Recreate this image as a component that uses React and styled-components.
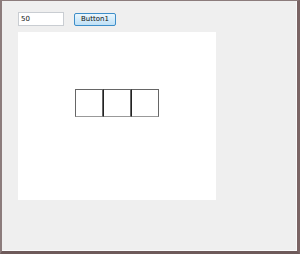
import styled, { createGlobalStyle } from 'styled-components'

const Global = createGlobalStyle`
  html, body {
    margin: 0;
    padding: 0;
    background: #efefef;
  }
`

const Frame = styled.div`
  box-sizing: border-box;
  width: 300px;
  height: 254px;
  background: #efefef;
  border-top: 1px solid #8c7c7c;
  border-left: 2px solid #8c7c7c;
  border-right: 3px solid #7a6464;
  border-bottom: 3px solid #6e5a5a;
  box-shadow: inset -1px -1px 0 #fafafa;
  padding: 11px 0 0 16px;
  font-family: Tahoma, "DejaVu Sans", sans-serif;
`

const Toolbar = styled.div`
  display: flex;
  align-items: center;
  gap: 10px;
  height: 14px;
`

const TextBox = styled.div`
  box-sizing: border-box;
  width: 46px;
  height: 14px;
  background: #fff;
  border: 1px solid #c9cdd2;
  font-size: 7px;
  line-height: 12px;
  padding-left: 2px;
  color: #111;
`

const Button = styled.div`
  box-sizing: border-box;
  width: 42px;
  height: 13px;
  border: 1px solid #3d8ec9;
  border-radius: 2px;
  background: linear-gradient(#eaf6fd, #d3ebfa 50%, #bfe0f6);
  font-size: 7px;
  line-height: 11px;
  text-align: center;
  color: #111;
`

const Panel = styled.div`
  box-sizing: border-box;
  width: 198px;
  height: 168px;
  margin-top: 6px;
  background: #fff;
  padding: 57px 0 0 57px;
`

const Cells = styled.div`
  display: flex;
`

const Cell = styled.div`
  box-sizing: border-box;
  width: 28px;
  height: 28px;
  border: 1px solid #666;
  border-bottom-color: #999;
  & + & {
    border-left-color: #222;
  }
`

export default function App() {
  return (
    <>
      <Global />
      <Frame>
        <Toolbar>
          <TextBox>50</TextBox>
          <Button>Button1</Button>
        </Toolbar>
        <Panel>
          <Cells>
            <Cell />
            <Cell />
            <Cell />
          </Cells>
        </Panel>
      </Frame>
    </>
  )
}
